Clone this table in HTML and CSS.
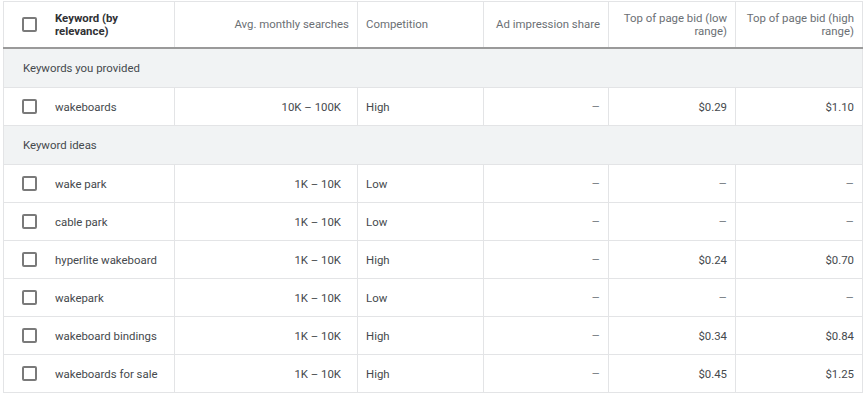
FILE: index.html
```html
<!DOCTYPE html>
<html lang="en">
<head>
  <meta charset="UTF-8" />
  <title>Keyword ideas</title>
  <link rel="stylesheet" href="styles.css">
</head>
<body>
  <div class="wrap">
    <table class="kw-table">
      <colgroup>
        <col class="c-kw">
        <col class="c-avg">
        <col class="c-comp">
        <col class="c-share">
        <col class="c-low">
        <col class="c-high">
      </colgroup>
      <thead>
        <tr>
          <th class="kw-head">
            <div class="kw-cell">
              <span class="box"></span>
              <span class="kw-title">Keyword (by<br>relevance)</span>
            </div>
          </th>
          <th class="num">Avg. monthly searches</th>
          <th>Competition</th>
          <th class="num">Ad impression share</th>
          <th class="num">Top of page bid (low<br>range)</th>
          <th class="num">Top of page bid (high<br>range)</th>
        </tr>
      </thead>
      <tbody>
        <tr class="group"><td colspan="6">Keywords you provided</td></tr>
        <tr>
          <td><div class="kw-cell"><span class="box"></span>wakeboards</div></td>
          <td class="num avg">10K – 100K</td>
          <td>High</td>
          <td class="num dash">–</td>
          <td class="num">$0.29</td>
          <td class="num">$1.10</td>
        </tr>
        <tr class="group"><td colspan="6">Keyword ideas</td></tr>
        <tr>
          <td><div class="kw-cell"><span class="box"></span>wake park</div></td>
          <td class="num avg">1K – 10K</td>
          <td>Low</td>
          <td class="num dash">–</td>
          <td class="num dash">–</td>
          <td class="num dash">–</td>
        </tr>
        <tr>
          <td><div class="kw-cell"><span class="box"></span>cable park</div></td>
          <td class="num avg">1K – 10K</td>
          <td>Low</td>
          <td class="num dash">–</td>
          <td class="num dash">–</td>
          <td class="num dash">–</td>
        </tr>
        <tr>
          <td><div class="kw-cell"><span class="box"></span>hyperlite wakeboard</div></td>
          <td class="num avg">1K – 10K</td>
          <td>High</td>
          <td class="num dash">–</td>
          <td class="num">$0.24</td>
          <td class="num">$0.70</td>
        </tr>
        <tr>
          <td><div class="kw-cell"><span class="box"></span>wakepark</div></td>
          <td class="num avg">1K – 10K</td>
          <td>Low</td>
          <td class="num dash">–</td>
          <td class="num dash">–</td>
          <td class="num dash">–</td>
        </tr>
        <tr>
          <td><div class="kw-cell"><span class="box"></span>wakeboard bindings</div></td>
          <td class="num avg">1K – 10K</td>
          <td>High</td>
          <td class="num dash">–</td>
          <td class="num">$0.34</td>
          <td class="num">$0.84</td>
        </tr>
        <tr>
          <td><div class="kw-cell"><span class="box"></span>wakeboards for sale</div></td>
          <td class="num avg">1K – 10K</td>
          <td>High</td>
          <td class="num dash">–</td>
          <td class="num">$0.45</td>
          <td class="num">$1.25</td>
        </tr>
      </tbody>
    </table>
  </div>
</body>
</html>
```

FILE: styles.css
```css
body {
  margin: 0;
  background: #fff;
  font-family: Roboto, "Liberation Sans", Arial, sans-serif;
  color: #3c4043;
}
.wrap {
  padding: 1px 0 0 3px;
}
.kw-table {
  width: 859px;
  table-layout: fixed;
  border-collapse: collapse;
  font-size: 11.4px;
}
.c-kw { width: 171px; }
.c-avg { width: 183px; }
.c-comp { width: 126px; }
.c-share { width: 125px; }
.c-low { width: 127px; }
.c-high { width: 127px; }

.kw-table th,
.kw-table td {
  border: 1px solid #e3e4e6;
  padding: 0 8px;
  text-align: left;
  vertical-align: middle;
}
.kw-table th {
  height: 45px;
  font-weight: normal;
  color: #6b6f74;
  line-height: 13px;
  white-space: nowrap;
  border-bottom: 2px solid #9a9a9a;
}
.kw-table td {
  height: 37px;
  color: #45494d;
}
.kw-table .num {
  text-align: right;
}
.kw-table td.avg {
  padding-right: 16px;
}
.kw-table td.dash {
  font-size: 13px;
  color: #80868b;
}
.kw-head .kw-title {
  font-weight: bold;
  color: #303134;
}
.kw-cell {
  display: flex;
  align-items: center;
  gap: 18px;
  padding-left: 10px;
}
.box {
  flex: none;
  width: 11px;
  height: 11px;
  border: 2px solid #7a7a7a;
  border-radius: 2px;
}
.group td {
  background: #f1f3f4;
  padding-left: 19px;
  height: 38px;
}
```
